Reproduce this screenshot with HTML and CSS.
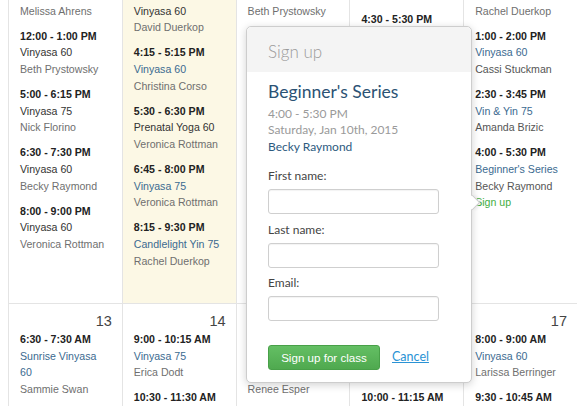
FILE: index.html
```html
<!DOCTYPE html>
<html lang="en">
<head>
    <meta charset="UTF-8">
    <meta name="viewport" content="width=device-width, initial-scale=1.0">
    <title>Class Schedule</title>
    <link rel="stylesheet" href="styles.css">
</head>
<body>
<div class="page">
    <div class="calendar">
        <div class="week week-cut">
            <div class="day past lead-1">
                <div class="event">
                    <div class="time">10:30 - 11:30 AM</div>
                    <div class="name">Slow Flow 60</div>
                    <div class="teacher">Melissa Ahrens</div>
                </div>
                <div class="event">
                    <div class="time">12:00 - 1:00 PM</div>
                    <div class="name">Vinyasa 60</div>
                    <div class="teacher">Beth Prystowsky</div>
                </div>
                <div class="event">
                    <div class="time">5:00 - 6:15 PM</div>
                    <div class="name">Vinyasa 75</div>
                    <div class="teacher">Nick Florino</div>
                </div>
                <div class="event">
                    <div class="time">6:30 - 7:30 PM</div>
                    <div class="name">Vinyasa 60</div>
                    <div class="teacher">Becky Raymond</div>
                </div>
                <div class="event">
                    <div class="time">8:00 - 9:00 PM</div>
                    <div class="name">Vinyasa 60</div>
                    <div class="teacher">Veronica Rottman</div>
                </div>
            </div>

            <div class="day today lead-2">
                <div class="event">
                    <div class="time">12:00 - 1:00 PM</div>
                    <div class="name">Vinyasa 60</div>
                    <div class="teacher">David Duerkop</div>
                </div>
                <div class="event">
                    <div class="time">4:15 - 5:15 PM</div>
                    <a class="name link" href="#">Vinyasa 60</a>
                    <div class="teacher">Christina Corso</div>
                </div>
                <div class="event">
                    <div class="time">5:30 - 6:30 PM</div>
                    <div class="name">Prenatal Yoga 60</div>
                    <div class="teacher">Veronica Rottman</div>
                </div>
                <div class="event">
                    <div class="time">6:45 - 8:00 PM</div>
                    <a class="name link" href="#">Vinyasa 75</a>
                    <div class="teacher">Veronica Rottman</div>
                </div>
                <div class="event">
                    <div class="time">8:15 - 9:30 PM</div>
                    <a class="name link" href="#">Candlelight Yin 75</a>
                    <div class="teacher">Rachel Duerkop</div>
                </div>
            </div>

            <div class="day lead-1">
                <div class="event">
                    <div class="time">9:00 - 10:00 AM</div>
                    <div class="name">Slow Flow 60</div>
                    <div class="teacher">Beth Prystowsky</div>
                </div>
                <div class="event">
                    <div class="time">12:00 - 1:00 PM</div>
                    <a class="name link" href="#">Vinyasa 60</a>
                    <div class="teacher">Erica Dodt</div>
                </div>
                <div class="event">
                    <div class="time">2:00 - 3:15 PM</div>
                    <a class="name link" href="#">Vinyasa 75</a>
                    <div class="teacher">Cassi Stuckman</div>
                </div>
            </div>

            <div class="day">
                <div class="event">
                    <div class="time">10:00 - 11:00 AM</div>
                    <div class="name">Slow Flow 60</div>
                    <div class="teacher">Erica Dodt</div>
                </div>
                <div class="event">
                    <div class="time">4:30 - 5:30 PM</div>
                    <a class="name link" href="#">Vinyasa 60</a>
                    <div class="teacher">Sammie Swan</div>
                </div>
                <div class="event">
                    <div class="time">6:00 - 7:15 PM</div>
                    <a class="name link" href="#">Vinyasa 75</a>
                    <div class="teacher">Nick Florino</div>
                </div>
            </div>

            <div class="day lead-1">
                <div class="event">
                    <div class="time">10:00 - 11:15 AM</div>
                    <div class="name">Slow Flow 75</div>
                    <div class="teacher">Rachel Duerkop</div>
                </div>
                <div class="event">
                    <div class="time">1:00 - 2:00 PM</div>
                    <a class="name link" href="#">Vinyasa 60</a>
                    <div class="teacher dark">Cassi Stuckman</div>
                </div>
                <div class="event">
                    <div class="time">2:30 - 3:45 PM</div>
                    <a class="name link" href="#">Vin &amp; Yin 75</a>
                    <div class="teacher dark">Amanda Brizic</div>
                </div>
                <div class="event">
                    <div class="time">4:00 - 5:30 PM</div>
                    <a class="name link" href="#">Beginner's Series</a>
                    <div class="teacher dark">Becky Raymond</div>
                    <a class="signup" href="#">Sign up</a>
                </div>
            </div>
        </div>

        <div class="week">
            <div class="day">
                <div class="date">13</div>
                <div class="event">
                    <div class="time">6:30 - 7:30 AM</div>
                    <a class="name link" href="#">Sunrise Vinyasa 60</a>
                    <div class="teacher">Sammie Swan</div>
                </div>
            </div>
            <div class="day">
                <div class="date">14</div>
                <div class="event">
                    <div class="time">9:00 - 10:15 AM</div>
                    <a class="name link" href="#">Vinyasa 75</a>
                    <div class="teacher">Erica Dodt</div>
                </div>
                <div class="event">
                    <div class="time">10:30 - 11:30 AM</div>
                    <a class="name link" href="#">Vinyasa 60</a>
                    <div class="teacher">Beth Prystowsky</div>
                </div>
            </div>
            <div class="day">
                <div class="date">15</div>
                <div class="event">
                    <div class="time">6:30 - 7:30 AM</div>
                    <a class="name link" href="#">Sunrise Vinyasa 60</a>
                    <div class="teacher">Renee Esper</div>
                </div>
            </div>
            <div class="day">
                <div class="date">16</div>
                <div class="event">
                    <div class="time">8:00 - 9:00 AM</div>
                    <a class="name link" href="#">Vinyasa 60</a>
                    <div class="teacher">Amanda Brizic</div>
                </div>
                <div class="event">
                    <div class="time">10:00 - 11:15 AM</div>
                    <a class="name link" href="#">Vinyasa 75</a>
                    <div class="teacher">Christina Corso</div>
                </div>
            </div>
            <div class="day">
                <div class="date">17</div>
                <div class="event">
                    <div class="time">8:00 - 9:00 AM</div>
                    <a class="name link" href="#">Vinyasa 60</a>
                    <div class="teacher">Larissa Berringer</div>
                </div>
                <div class="event">
                    <div class="time">9:30 - 10:45 AM</div>
                    <a class="name link" href="#">Vinyasa 75</a>
                    <div class="teacher">David Duerkop</div>
                </div>
            </div>
        </div>
    </div>

    <div class="popover">
        <span class="arrow"></span>
        <div class="popover-title">Sign up</div>
        <div class="popover-body">
            <h2 class="class-title">Beginner's Series</h2>
            <div class="meta">4:00 - 5:30 PM</div>
            <div class="meta">Saturday, Jan 10th, 2015</div>
            <a class="meta teacher-link" href="#">Becky Raymond</a>

            <form class="signup-form">
                <div class="field">
                    <label for="first_name">First name:</label>
                    <input type="text" id="first_name" name="first_name">
                </div>
                <div class="field">
                    <label for="last_name">Last name:</label>
                    <input type="text" id="last_name" name="last_name">
                </div>
                <div class="field">
                    <label for="email">Email:</label>
                    <input type="text" id="email" name="email">
                </div>
                <div class="actions">
                    <button type="submit">Sign up for class</button>
                    <a class="cancel" href="#">Cancel</a>
                </div>
            </form>
        </div>
    </div>
</div>
</body>
</html>
```

FILE: styles.css
```css
body {
    margin: 0;
    background-color: #fff;
    font-family: "Liberation Sans", Arial, sans-serif;
    font-size: 10.6px;
    line-height: 16.6px;
    color: #333;
}

a {
    text-decoration: none;
}

.page {
    position: relative;
    width: 577px;
    height: 406px;
    overflow: hidden;
}

/* calendar grid */

.calendar {
    margin: -47px 0 0 8px;
    width: 569px;
}

.week {
    display: grid;
    grid-template-columns: repeat(5, 1fr);
}

.week + .week {
    border-top: 1px solid #e4e4e4;
}

.day {
    border-left: 1px solid #e4e4e4;
    padding: 0 12px 34px 11px;
    min-width: 0;
}

.day.today {
    background-color: #fcf8e5;
}

.day.lead-1 {
    padding-top: 16.6px;
}

.day.lead-2 {
    padding-top: 33.2px;
}

.date {
    margin: 7px -2px 0 0;
    text-align: right;
    font-size: 14.5px;
    line-height: 20px;
    color: #444;
}

.event + .event {
    margin-top: 8.5px;
}

.time {
    font-weight: bold;
    color: #222;
}

.name {
    display: block;
    color: #333;
}

.name.link {
    color: #3b6a90;
}

.teacher {
    color: #6f6f6f;
}

.teacher.dark {
    color: #555;
}

.signup {
    display: block;
    color: #3fae3f;
}

/* popover */

.popover {
    position: absolute;
    left: 246px;
    top: 26px;
    width: 224px;
    background-color: #fff;
    border: 1px solid #cdcdcd;
    border-radius: 5px;
    box-shadow: 0 2px 8px rgba(0, 0, 0, 0.18);
    font-family: Lato, "Open Sans", sans-serif;
}

.arrow {
    position: absolute;
    left: 220px;
    top: 170px;
    width: 10px;
    height: 10px;
    background-color: #fff;
    border-top: 1px solid #cdcdcd;
    border-right: 1px solid #cdcdcd;
    transform: rotate(45deg);
    box-shadow: 2px -2px 3px rgba(0, 0, 0, 0.06);
}

.popover-title {
    padding: 14px 21px 10px;
    background-color: #f4f4f4;
    border-radius: 5px 5px 0 0;
    font-size: 17px;
    font-weight: 300;
    line-height: 21px;
    color: #9b9b9b;
}

.popover-body {
    padding: 0 21px 12px;
}

.class-title {
    margin: 8px 0 2px;
    font-size: 17.5px;
    font-weight: normal;
    line-height: 24px;
    color: #2b5274;
}

.meta {
    display: block;
    font-size: 12px;
    line-height: 16.3px;
    color: #9a9a9a;
}

.teacher-link {
    color: #2d5a80;
}

.signup-form {
    margin-top: 13.5px;
}

.field {
    margin-bottom: 7.5px;
}

.field label {
    display: block;
    margin-bottom: 5px;
    font-size: 12px;
    line-height: 16px;
    color: #444;
}

.field input {
    display: block;
    box-sizing: border-box;
    width: 171px;
    height: 25px;
    margin: 0;
    border: 1px solid #cfcfcf;
    border-radius: 3px;
    box-shadow: inset 0 1px 1px rgba(0, 0, 0, 0.05);
}

.actions {
    display: flex;
    align-items: center;
    margin-top: 23.5px;
}

.actions button {
    box-sizing: border-box;
    width: 112px;
    height: 25px;
    padding: 0;
    border: 1px solid #48a048;
    border-radius: 3px;
    background: linear-gradient(#64bf64, #4fa94f);
    color: white;
    font-family: "Liberation Sans", Arial, sans-serif;
    font-size: 11.6px;
    cursor: pointer;
}

.cancel {
    margin-left: 12px;
    font-size: 12.5px;
    color: #2a93d5;
    text-decoration: underline;
}
```
